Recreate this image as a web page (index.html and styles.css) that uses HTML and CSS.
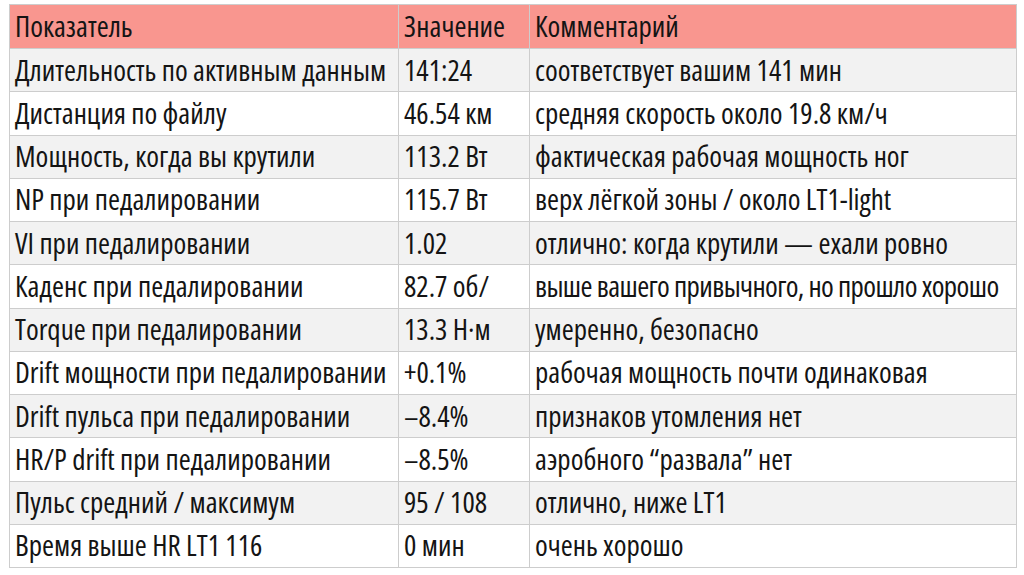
FILE: index.html
```html
<!DOCTYPE html>
<html lang="ru">
<head>
<meta charset="utf-8">
<title>Показатели</title>
<link rel="stylesheet" href="styles.css">
</head>
<body>
<table class="stats">
  <colgroup>
    <col class="c-name">
    <col class="c-val">
    <col class="c-note">
  </colgroup>
  <thead>
    <tr><th>Показатель</th><th>Значение</th><th>Комментарий</th></tr>
  </thead>
  <tbody>
    <tr><td>Длительность по активным данным</td><td>141:24</td><td>соответствует вашим 141 мин</td></tr>
    <tr><td>Дистанция по файлу</td><td>46.54 км</td><td>средняя скорость около 19.8 км/ч</td></tr>
    <tr><td>Мощность, когда вы крутили</td><td>113.2 Вт</td><td>фактическая рабочая мощность ног</td></tr>
    <tr><td>NP при педалировании</td><td>115.7 Вт</td><td>верх лёгкой зоны / около LT1-light</td></tr>
    <tr><td>VI при педалировании</td><td>1.02</td><td>отлично: когда крутили — ехали ровно</td></tr>
    <tr><td>Каденс при педалировании</td><td>82.7 об/</td><td class="tight">выше вашего привычного, но прошло хорошо</td></tr>
    <tr><td>Torque при педалировании</td><td>13.3 Н·м</td><td>умеренно, безопасно</td></tr>
    <tr><td>Drift мощности при педалировании</td><td>+0.1%</td><td>рабочая мощность почти одинаковая</td></tr>
    <tr><td>Drift пульса при педалировании</td><td>–8.4%</td><td>признаков утомления нет</td></tr>
    <tr><td>HR/P drift при педалировании</td><td>–8.5%</td><td>аэробного “развала” нет</td></tr>
    <tr><td>Пульс средний / максимум</td><td>95 / 108</td><td>отлично, ниже LT1</td></tr>
    <tr><td>Время выше HR LT1 116</td><td>0 мин</td><td>очень хорошо</td></tr>
  </tbody>
</table>
</body>
</html>
```
FILE: styles.css
```css
html, body {
  margin: 0;
  padding: 0;
  background: #ffffff;
}
body {
  padding: 4px 9px 0 9px;
}
.stats {
  width: 1007px;
  border-collapse: collapse;
  table-layout: fixed;
  font-family: "Open Sans", "Liberation Sans", sans-serif;
  font-stretch: 75%;
  font-weight: 380;
  font-size: 29px;
  color: #141414;
}
.c-name { width: 389px; }
.c-val { width: 131px; }
.c-note { width: 487px; }
.stats th,
.stats td {
  border: 1px solid #cdcdcd;
  height: 43.25px;
  padding: 0 0 1px 5px;
  text-align: left;
  font-weight: 380;
  white-space: nowrap;
  overflow: hidden;
  vertical-align: middle;
  line-height: 30px;
  box-sizing: border-box;
}
.stats th {
  background: #f9968f;
  height: 44px;
}
.stats tbody tr:nth-child(odd) td {
  background: #f2f2f2;
}
.stats tbody tr:nth-child(even) td {
  background: #ffffff;
}
.stats td.tight {
  letter-spacing: -0.6px;
}
```
